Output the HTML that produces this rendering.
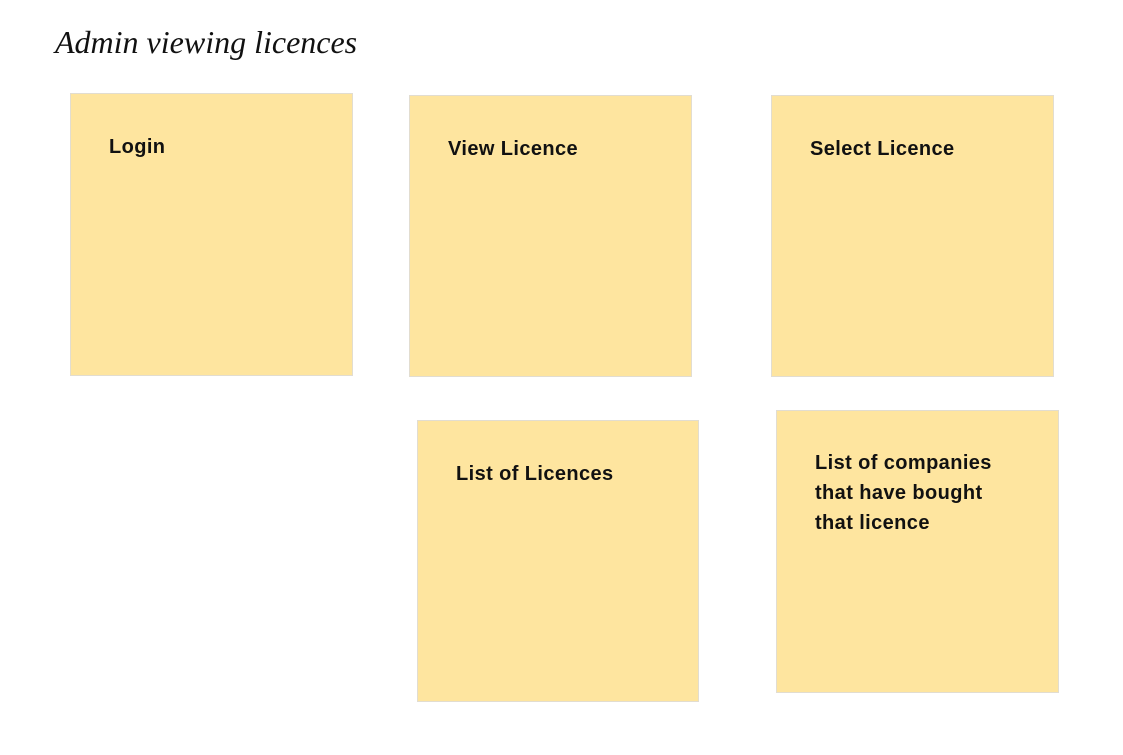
<!DOCTYPE html>
<html><head><meta charset="utf-8"><style>
html,body{margin:0;padding:0;background:#fff;width:1123px;height:755px;overflow:hidden;position:relative}
.t{position:absolute;left:55px;top:22px;font-family:"Comic Sans MS","URW Chancery L",cursive;font-size:32px;color:#111;font-style:italic;line-height:40px}
.n{position:absolute;width:281px;height:281px;background:#fee59f;border:1px solid #e2ddd0;box-sizing:border-box}
.n div{position:absolute;left:38px;top:38px;font-family:"Liberation Sans",sans-serif;font-weight:bold;font-size:20px;line-height:30px;color:#111;letter-spacing:0.4px}
</style></head><body>
<div class="t">Admin viewing licences</div>
<div class="n" style="left:70px;top:93px;width:283px;height:283px"><div>Login</div></div>
<div class="n" style="left:409px;top:95px;width:283px;height:282px"><div>View Licence</div></div>
<div class="n" style="left:771px;top:95px;width:283px;height:282px"><div>Select Licence</div></div>
<div class="n" style="left:417px;top:420px;width:282px;height:282px"><div>List of Licences</div></div>
<div class="n" style="left:776px;top:410px;width:283px;height:283px"><div style="top:37px">List of companies<br>that have bought<br>that licence</div></div>
</body></html>
